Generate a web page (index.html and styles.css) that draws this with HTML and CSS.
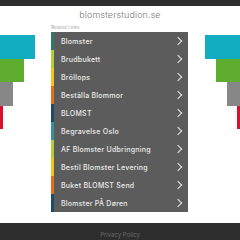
FILE: index.html
```html
<!DOCTYPE html>
<html lang="en">
<head>
    <meta charset="UTF-8">
    <meta name="viewport" content="width=device-width, initial-scale=1.0">
    <title>blomsterstudion.se</title>
    <link rel="stylesheet" href="styles.css">
</head>
<body>

    <div class="topbar"></div>

    <header class="title">blomsterstudion.se</header>

    <div class="main">
        <div class="deco deco-left">
            <span class="bar cyan"></span>
            <span class="bar green"></span>
            <span class="bar gray"></span>
            <span class="bar red"></span>
        </div>

        <div class="center">
            <div class="label">Related Links</div>
            <ul class="links">
                <li class="c-teal"><a href="#">Blomster</a></li>
                <li class="c-lime"><a href="#">Brudbukett</a></li>
                <li class="c-yellow"><a href="#">Bröllops</a></li>
                <li class="c-orange"><a href="#">Beställa Blommor</a></li>
                <li class="c-navy"><a href="#">BLOMST</a></li>
                <li class="c-sea"><a href="#">Begravelse Oslo</a></li>
                <li class="c-lime"><a href="#">AF Blomster Udbringning</a></li>
                <li class="c-yellow"><a href="#">Bestil Blomster Levering</a></li>
                <li class="c-orange"><a href="#">Buket BLOMST Send</a></li>
                <li class="c-navy"><a href="#">Blomster PÅ Døren</a></li>
            </ul>
        </div>

        <div class="deco deco-right">
            <span class="bar cyan"></span>
            <span class="bar green"></span>
            <span class="bar gray"></span>
            <span class="bar red"></span>
        </div>
    </div>

    <footer class="footer">
        <p>Privacy Policy</p>
    </footer>

</body>
</html>
```

FILE: styles.css
```css
:root {
    --dark: #2e2e2e;
    --panel: #5c5c5c;
    --cyan: #13adc1;
    --green: #5fad2f;
    --gray: #878787;
    --red: #d9112d;
}

body {
    margin: 0;
    font-family: "Inter", "Open Sans", sans-serif;
    background-color: #ffffff;
    overflow: hidden;
}

.topbar {
    height: 6px;
    background-color: var(--dark);
}

.title {
    height: 18px;
    line-height: 18px;
    text-align: center;
    font-size: 9px;
    font-weight: 300;
    color: #7a7a7a;
    letter-spacing: 0.1px;
}

.main {
    display: grid;
    grid-template-columns: 51px 137px 52px;
}

.deco {
    display: flex;
    flex-direction: column;
    padding-top: 11px;
}

.deco-left {
    align-items: flex-start;
}

.deco-right {
    align-items: flex-end;
}

.bar {
    display: block;
    height: 23.5px;
}

.cyan { width: 35px; background-color: var(--cyan); }
.green { width: 24px; background-color: var(--green); }
.gray { width: 13px; background-color: var(--gray); }
.red { width: 3px; background-color: var(--red); }

.label {
    height: 8px;
    line-height: 8px;
    font-size: 4.5px;
    color: #a8a8a8;
}

.links {
    list-style: none;
    margin: 0;
    padding: 0;
    background-color: var(--panel);
}

.links li {
    height: 18px;
    border-left: 3px solid #5c5c5c;
}

.links a {
    display: flex;
    align-items: center;
    justify-content: space-between;
    height: 18px;
    padding: 0 4px 0 7px;
    color: #ececec;
    text-decoration: none;
    font-size: 7px;
    font-weight: 500;
    letter-spacing: 0.25px;
}

.links a::after {
    content: "";
    width: 5px;
    height: 5px;
    margin-right: 3px;
    border-top: 1px solid #e6e6e6;
    border-right: 1px solid #e6e6e6;
    transform: rotate(45deg);
}

.links .c-teal { border-left-color: #2d7a66; }
.links .c-lime { border-left-color: #b2cf3a; }
.links .c-yellow { border-left-color: #f2c51c; }
.links .c-orange { border-left-color: #e56d1f; }
.links .c-navy { border-left-color: #1b4d6b; }
.links .c-sea { border-left-color: #3a9097; }

.footer {
    margin-top: 11px;
    height: 17px;
    background-color: var(--dark);
    overflow: hidden;
}

.footer p {
    margin: 0;
    padding-top: 8px;
    text-align: center;
    font-size: 6px;
    color: #6a6a6a;
}
```
